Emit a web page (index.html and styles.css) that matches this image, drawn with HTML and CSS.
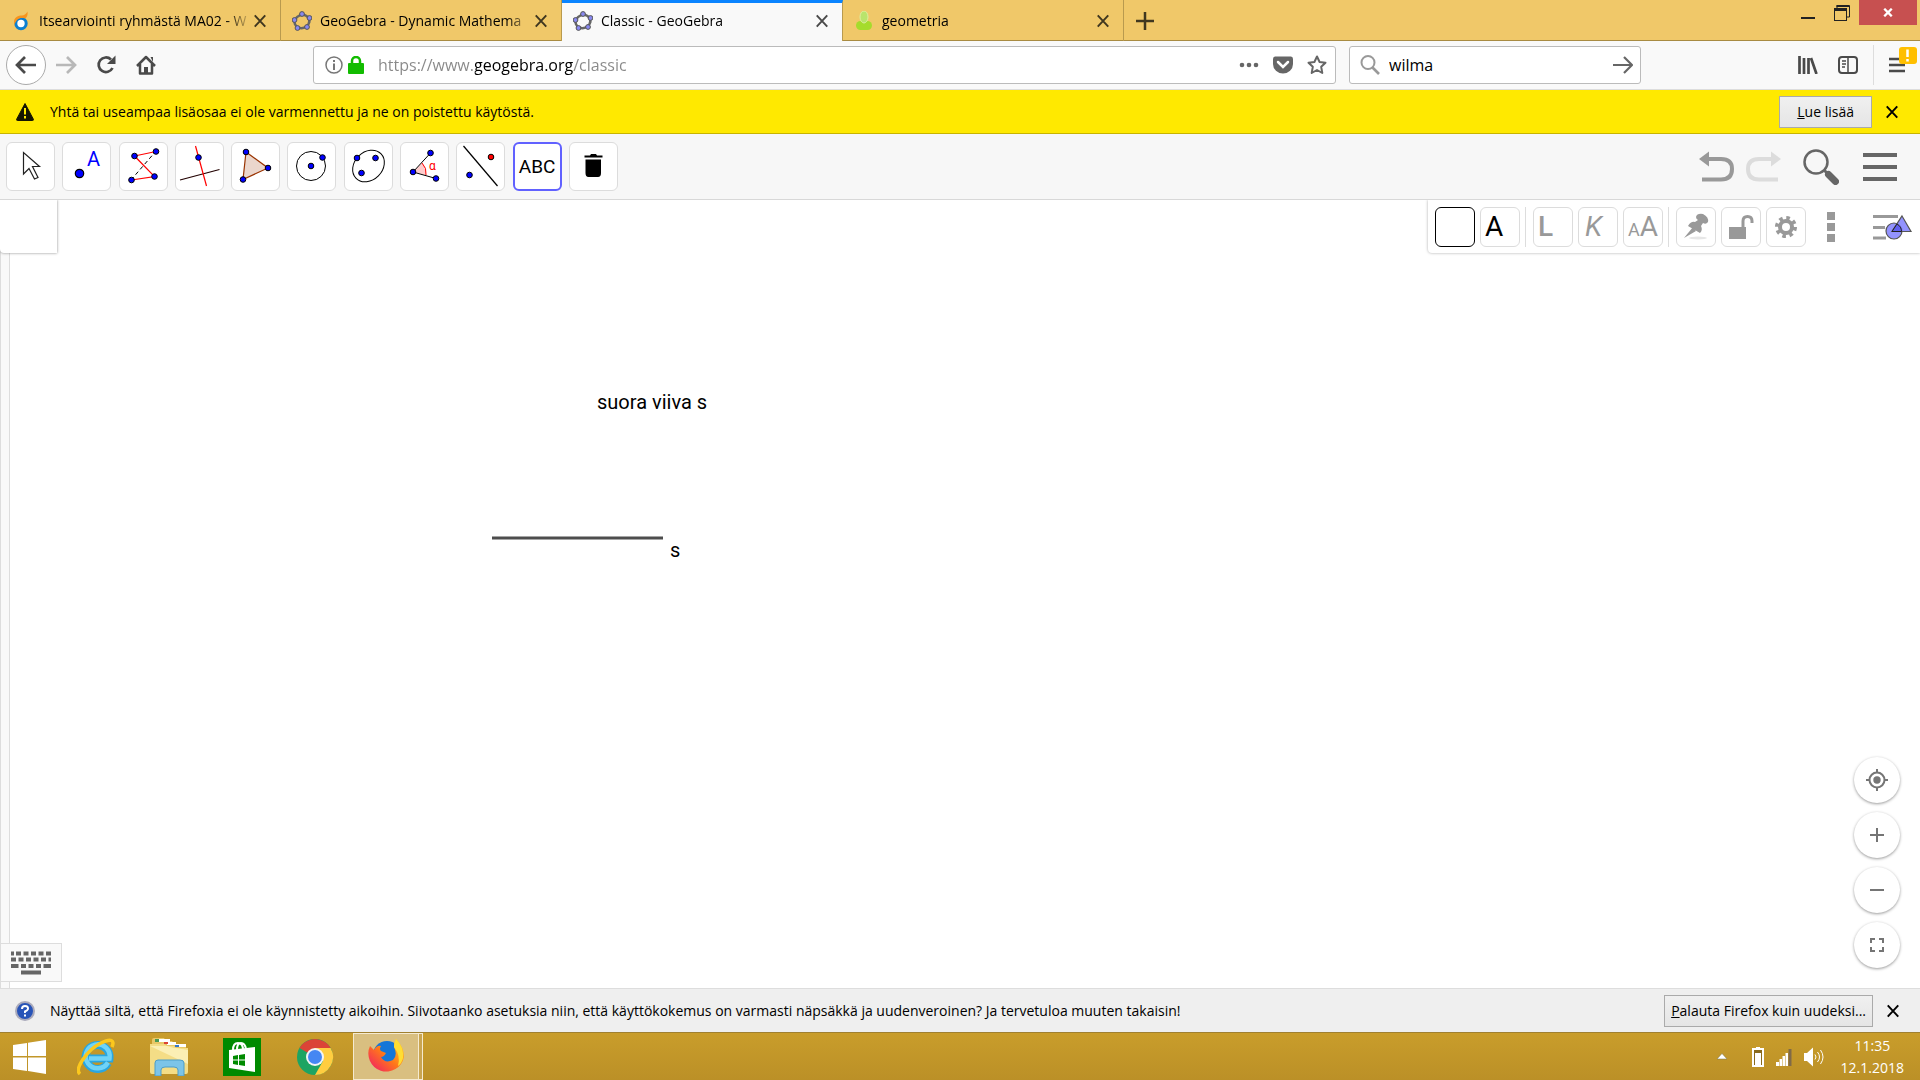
FILE: index.html
```html
<!DOCTYPE html>
<html lang="fi">
<head>
    <meta charset="UTF-8">
    <meta name="viewport" content="width=device-width, initial-scale=1.0">
    <title>Classic - GeoGebra</title>
    <link rel="stylesheet" href="styles.css">
</head>
<body>
    <!-- Shared icons -->
    <svg class="sprite" aria-hidden="true">
        <symbol id="close" viewBox="0 0 16 16">
            <path d="M2 1.500L14 14.500M14 1.500L2 14.500" fill="none" stroke="currentColor" stroke-width="2.200"/>
        </symbol>
        <symbol id="geogebra" viewBox="0 0 20 20">
            <ellipse cx="10" cy="10.500" rx="7.500" ry="6.500" fill="none" stroke="#666" stroke-width="2.500" transform="rotate(-20 10 10.500)"/>
            <g fill="#8888f0" stroke="#555" stroke-width="1">
                <circle cx="10" cy="3" r="2.400"/><circle cx="17.500" cy="7" r="2.400"/><circle cx="15" cy="16" r="2.400"/>
                <circle cx="5.500" cy="17" r="2.400"/><circle cx="2.500" cy="9" r="2.400"/>
            </g>
        </symbol>
    </svg>

    <!-- Browser tabs -->
    <header class="tabs">
        <div class="tab">
            <svg class="favicon" viewBox="0 0 20 20">
                <circle cx="10" cy="12.500" r="5.200" fill="#fff" stroke="#0b7fd0" stroke-width="3"/>
                <path d="M3.500 14C1.500 7 6 4.500 11 4.500C13 4.500 15 3 16.500 0.500C17 4 16 6.500 14 7.500C9 6 5 8 3.500 14Z" fill="#f7941d"/>
            </svg>
            <a class="tab-title" href="#">Itsearviointi ryhmästä MA02 - W</a>
            <button class="tab-close" aria-label="Sulje"><svg><use href="#close"/></svg></button>
        </div>
        <div class="tab">
            <svg class="favicon"><use href="#geogebra"/></svg>
            <a class="tab-title" href="#">GeoGebra - Dynamic Mathema</a>
            <button class="tab-close" aria-label="Sulje"><svg><use href="#close"/></svg></button>
        </div>
        <div class="tab active">
            <svg class="favicon"><use href="#geogebra"/></svg>
            <a class="tab-title" href="#">Classic - GeoGebra</a>
            <button class="tab-close" aria-label="Sulje"><svg><use href="#close"/></svg></button>
        </div>
        <div class="tab">
            <svg class="favicon" viewBox="0 0 20 20">
                <rect x="2" y="10" width="16" height="9" rx="4.500" fill="#a5dc2c"/>
                <ellipse cx="10" cy="6" rx="4" ry="6" fill="#b9e46c" stroke="#dcef9e"/>
            </svg>
            <a class="tab-title" href="#">geometria</a>
            <button class="tab-close" aria-label="Sulje"><svg><use href="#close"/></svg></button>
        </div>
        <button class="new-tab" aria-label="Uusi välilehti">
            <svg width="18" height="18" viewBox="0 0 18 18"><path d="M9 0V18M0 9H18" stroke="#40371f" stroke-width="2.500"/></svg>
        </button>
        <div class="window-buttons">
            <button aria-label="Pienennä"><svg width="14" height="16"><rect y="12" width="14" height="2" fill="#222"/></svg></button>
            <button aria-label="Palauta">
                <svg width="16" height="16" viewBox="0 0 16 16"><path d="M3 3V0.500H15.500V12H12" fill="none" stroke="#222"/><path d="M2.500 1H15" stroke="#222" stroke-width="2"/><rect x="0.500" y="4" width="12" height="11.500" fill="#f0c869" stroke="#222"/><path d="M0 4.500H13" stroke="#222" stroke-width="3"/></svg>
            </button>
            <button class="window-close" aria-label="Sulje ikkuna">
                <svg width="10" height="9" viewBox="0 0 12 10"><path d="M1.500 0.500L10.500 9.500M10.500 0.500L1.500 9.500" stroke="#fff" stroke-width="2.800"/></svg>
            </button>
        </div>
    </header>

    <!-- Address bar -->
    <nav class="navbar">
        <div class="nav-buttons">
            <button class="back" aria-label="Takaisin">
                <svg width="22" height="20" viewBox="0 0 22 20"><path d="M21 10H3M10 2L2 10L10 18" fill="none" stroke="#4a4a4a" stroke-width="2.700"/></svg>
            </button>
            <button aria-label="Eteenpäin">
                <svg width="22" height="20" viewBox="0 0 22 20"><path d="M1 10H19M12 2L20 10L12 18" fill="none" stroke="#b8b8b8" stroke-width="2.700"/></svg>
            </button>
            <button aria-label="Päivitä">
                <svg width="20" height="20" viewBox="0 0 20 20"><path d="M15 4.500A7.300 7.300 0 1 0 16.500 13" fill="none" stroke="#4a4a4a" stroke-width="2.700"/><path d="M19.500 0.500V9H11Z" fill="#4a4a4a"/></svg>
            </button>
            <button aria-label="Koti">
                <svg width="20" height="20" viewBox="0 0 20 20"><path d="M1 11L10 2L19 11M4 9V18.500H16V9" fill="none" stroke="#4a4a4a" stroke-width="2.500" stroke-linejoin="round"/><path d="M8 18V12H12V18M14.500 2H17V7" fill="#4a4a4a"/></svg>
            </button>
        </div>
        <div class="field url-field">
            <svg width="18" height="18" viewBox="0 0 18 18"><circle cx="9" cy="9" r="8" fill="none" stroke="#777" stroke-width="1.500"/><path d="M9 7.500V14M9 4V6" stroke="#777" stroke-width="2"/></svg>
            <svg width="16" height="18" viewBox="0 0 16 18"><rect y="7" width="16" height="11" rx="1" fill="#12bc00"/><path d="M4 8V5A4 4 0 0 1 12 5V8" fill="none" stroke="#12bc00" stroke-width="2.500"/></svg>
            <input class="url" type="text" aria-label="Osoite" value="https://www.geogebra.org/classic">
            <svg width="20" height="18" viewBox="0 0 20 18"><g fill="#666"><circle cx="3" cy="9" r="2.300"/><circle cx="10" cy="9" r="2.300"/><circle cx="17" cy="9" r="2.300"/></g></svg>
            <svg width="20" height="18" viewBox="0 0 20 18"><path d="M2 0.500H18Q20 0.500 20 3V8A10 9.500 0 0 1 0 8V3Q0 0.500 2 0.500Z" fill="#666"/><path d="M5 6L10 11L15 6" fill="none" stroke="#fff" stroke-width="2.500" stroke-linecap="round"/></svg>
            <svg width="20" height="20" viewBox="0 0 20 20"><path d="M10 1.500L12.600 7L18.500 7.700L14.200 11.800L15.300 18L10 15L4.700 18L5.800 11.800L1.500 7.700L7.400 7Z" fill="none" stroke="#666" stroke-width="2" stroke-linejoin="round"/></svg>
        </div>
        <div class="field search-field">
            <svg width="20" height="20" viewBox="0 0 20 20"><circle cx="8" cy="7.500" r="6.500" fill="none" stroke="#999" stroke-width="2"/><path d="M12.500 12.500L19 19" stroke="#999" stroke-width="2.700"/></svg>
            <input type="text" aria-label="Haku" value="wilma">
            <svg width="20" height="18" viewBox="0 0 20 18"><path d="M0 9H18M11 1L19 9L11 17" fill="none" stroke="#666" stroke-width="2.200"/></svg>
        </div>
        <div class="nav-tools">
            <button aria-label="Kirjasto"><svg width="20" height="18" viewBox="0 0 20 18"><path d="M1.500 0V18M6 2V18M10.500 2V18M13 2L18.500 18" stroke="#4a4a4a" stroke-width="2.700"/></svg></button>
            <button aria-label="Sivupaneeli"><svg width="20" height="18" viewBox="0 0 20 18"><rect x="1" y="1" width="18" height="16" rx="3" fill="none" stroke="#4a4a4a" stroke-width="2"/><path d="M10 1V17M4 5H8M4 8H8M4 11H7" stroke="#4a4a4a" stroke-width="1.500"/></svg></button>
            <button class="app-menu" aria-label="Valikko">
                <svg width="16" height="18" viewBox="0 0 16 18"><path d="M0 3H16M0 9H16M0 15H16" stroke="#4a4a4a" stroke-width="2.500"/></svg>
                <span class="badge"><svg width="17" height="17" viewBox="0 0 17 17"><path d="M8.500 2.500V10M8.500 12V14.500" stroke="#fff" stroke-width="2.500"/></svg></span>
            </button>
        </div>
    </nav>

    <!-- Add-on warning -->
    <div class="notice warning">
        <svg width="18" height="18" viewBox="0 0 18 18"><path d="M9 0.500L17.500 16.500Q17.500 17.500 16.500 17.500H1.500Q0.500 17.500 0.500 16.500Z" fill="#141400" stroke="#141400" stroke-linejoin="round"/><path d="M9 5V11.500M9 13V15.500" stroke="#ffe900" stroke-width="2"/></svg>
        <p>Yhtä tai useampaa lisäosaa ei ole varmennettu ja ne on poistettu käytöstä.</p>
        <button class="notice-button"><u>L</u>ue lisää</button>
        <button class="notice-close" aria-label="Sulje"><svg><use href="#close"/></svg></button>
    </div>

    <!-- GeoGebra -->
    <div class="toolbar">
        <div class="tools">
            <button aria-label="Siirrä"><svg viewBox="0 0 49 49"><path d="M17.500 10.500V32L23 26.500L28.500 37L32 35.500L26.500 24.500H33.500Z" fill="#fff" stroke="#222" stroke-width="1.200"/></svg></button>
            <button aria-label="Piste"><svg viewBox="0 0 49 49"><circle cx="17.500" cy="31.500" r="4.200" fill="#00f" stroke="#000" stroke-width="1.200"/><text x="25" y="24" class="point-name">A</text></svg></button>
            <button aria-label="Murtoviiva"><svg viewBox="0 0 49 49"><path d="M12 38L37 9" stroke="#000" stroke-dasharray="4 3"/><path d="M37 9.500L15.500 14L35.500 34.500L12.500 38" fill="none" stroke="#f00" stroke-width="1.200"/><g fill="#00f" stroke="#000"><circle cx="37" cy="9.500" r="2.800"/><circle cx="15.500" cy="14" r="2.800"/><circle cx="35.500" cy="34.500" r="2.800"/><circle cx="12.500" cy="38" r="2.800"/></g></svg></button>
            <button aria-label="Normaali"><svg viewBox="0 0 49 49"><path d="M5 38L44.500 27.500" stroke="#200" stroke-width="1.200"/><path d="M20.500 4L31.500 44" stroke="#f00" stroke-width="1.200"/><circle cx="23.500" cy="15.500" r="2.800" fill="#00f" stroke="#000"/></svg></button>
            <button aria-label="Monikulmio"><svg viewBox="0 0 49 49"><path d="M15 10L37 26L12 37.500Z" fill="#ebd6cc" stroke="#993300" stroke-width="1.200"/><g fill="#00f" stroke="#000"><circle cx="15" cy="10" r="2.800"/><circle cx="37" cy="26" r="2.800"/><circle cx="12" cy="37.500" r="2.800"/></g></svg></button>
            <button aria-label="Ympyrä"><svg viewBox="0 0 49 49"><circle cx="24" cy="24" r="14.500" fill="none" stroke="#000"/><g fill="#00f" stroke="#000"><circle cx="24" cy="24" r="2.800"/><circle cx="35.500" cy="15.500" r="2.800"/></g></svg></button>
            <button aria-label="Ellipsi"><svg viewBox="0 0 49 49"><ellipse cx="24.500" cy="24" rx="17.500" ry="14" transform="rotate(-45 24.500 24)" fill="none" stroke="#000"/><g fill="#00f" stroke="#000"><circle cx="13" cy="16" r="2.800"/><circle cx="31.500" cy="16" r="2.800"/><circle cx="17.500" cy="31" r="2.800"/></g></svg></button>
            <button aria-label="Kulma"><svg viewBox="0 0 49 49"><path d="M13 30L22 21Q27 26 26 33Z" fill="#fcc"/><path d="M22 21Q27 26 26 33" fill="none" stroke="#f00"/><path d="M30.500 11L13 30L36 36.500" fill="none" stroke="#000"/><g fill="#00f" stroke="#000"><circle cx="30.500" cy="11" r="2.800"/><circle cx="13" cy="30" r="2.800"/><circle cx="36" cy="36.500" r="2.800"/></g><text x="29" y="28" class="angle-name">α</text></svg></button>
            <button aria-label="Peilaus"><svg viewBox="0 0 49 49"><path d="M7.500 4L41.500 44" stroke="#000" stroke-width="1.200"/><circle cx="13.500" cy="33" r="2.800" fill="#00f" stroke="#000"/><circle cx="35" cy="15" r="2.800" fill="#f00" stroke="#000"/></svg></button>
            <button class="selected">ABC</button>
            <button aria-label="Poista"><svg viewBox="0 0 49 49"><path d="M16.500 17.500H32V31Q32 35 29 35H19.500Q16.500 35 16.500 31ZM15.500 13.500H21L22 12H27L28 13.500H33.500V15.500H15.500Z"/></svg></button>
        </div>
        <div class="actions">
            <button aria-label="Kumoa"><svg width="36" height="32" viewBox="0 0 36 32"><path d="M8 8H22Q33 8 33 18Q33 28.500 22 28.500H3" fill="none" stroke="#999" stroke-width="4"/><path d="M0 8L10 0.500V15.500Z" fill="#999"/></svg></button>
            <button aria-label="Tee uudelleen"><svg width="36" height="32" viewBox="0 0 36 32"><path d="M28 8H14Q3 8 3 18Q3 28.500 14 28.500H33" fill="none" stroke="#dcdcdc" stroke-width="4"/><path d="M36 8L26 0.500V15.500Z" fill="#dcdcdc"/></svg></button>
            <button class="find" aria-label="Etsi"><svg width="36" height="36" viewBox="0 0 36 36"><circle cx="13" cy="13" r="11.500" fill="none" stroke="#666" stroke-width="2.500"/><path d="M21 21L25 25" stroke="#666" stroke-width="3"/><path d="M25.500 25.500L32.500 32.500" stroke="#666" stroke-width="7" stroke-linecap="round"/></svg></button>
            <button aria-label="Valikko"><svg width="34" height="30" viewBox="0 0 34 30"><path d="M0 3H34M0 15H34M0 27H34" stroke="#666" stroke-width="4"/></svg></button>
        </div>
    </div>

    <main class="workspace">
        <div class="algebra-strip"></div>
        <div class="algebra-corner"></div>
        <div class="graphics">
            <svg class="segment" width="171" height="4"><path d="M0 2H171" stroke="#4d4d4d" stroke-width="3"/></svg>
            <span class="object-text">suora viiva s</span>
            <span class="object-label">s</span>
        </div>
        <div class="stylebar">
            <button class="colour" aria-label="Taustaväri"></button>
            <button class="text-colour">A</button>
            <span class="divider"></span>
            <button class="bold">L</button>
            <button class="italic">K</button>
            <button class="size"><small>A</small>A</button>
            <span class="divider"></span>
            <button aria-label="Kiinnitä"><svg width="26" height="28" viewBox="0 0 26 28"><ellipse cx="15" cy="25" rx="9" ry="1.500" fill="#e6e6e6"/><path d="M13 4Q14 0 20 1Q26 4 25 9Q23 12 20 10L18 13Q20 17 17 20L5 13Q8 8 12 9L15 7Q13 6 13 4Z" fill="#999"/><path d="M10 14L1 25L13 18Z" fill="#999"/></svg></button>
            <button aria-label="Lukitus"><svg width="26" height="26" viewBox="0 0 26 26"><rect x="1" y="13" width="17" height="12" fill="#999"/><path d="M15 13V7Q15 2.500 19.500 2.500Q24 2.500 24 7V9" fill="none" stroke="#999" stroke-width="3"/></svg></button>
            <button aria-label="Asetukset"><svg width="22" height="22" viewBox="0 0 22 22"><circle cx="11" cy="11" r="6" fill="none" stroke="#999" stroke-width="4"/><circle cx="11" cy="11" r="9" fill="none" stroke="#999" stroke-width="4" stroke-dasharray="3.500 3.570"/></svg></button>
            <button class="plain more" aria-label="Lisää"><svg width="8" height="30" viewBox="0 0 8 30"><path d="M0 0H8V8H0ZM0 11H8V19H0ZM0 22H8V30H0Z" fill="#999"/></svg></button>
            <button class="plain style-toggle" aria-label="Tyylipalkki"><svg width="40" height="28" viewBox="0 0 40 28"><path d="M0 3.500H25M0 14.500H12M0 25H13" stroke="#999" stroke-width="3"/><g fill="#8080ff" fill-opacity="0.850" stroke="#555" stroke-width="1.200"><circle cx="21" cy="18" r="8"/><path d="M29 3L38 18.500H19Z"/></g><path d="M24 11Q28.500 13.500 28.500 18.500H19Z" fill="#6060f0" stroke="#222"/></svg></button>
        </div>
        <div class="zoom-buttons">
            <button aria-label="Oletusnäkymä"><svg width="22" height="22" viewBox="0 0 22 22"><circle cx="11" cy="11" r="7.500" fill="none" stroke="#757575" stroke-width="2"/><circle cx="11" cy="11" r="3.700" fill="#757575"/><path d="M11 0V4M11 18V22M0 11H4M18 11H22" stroke="#757575" stroke-width="2"/></svg></button>
            <button aria-label="Lähennä"><svg width="14" height="14" viewBox="0 0 14 14"><path d="M7 0V14M0 7H14" stroke="#757575" stroke-width="2"/></svg></button>
            <button aria-label="Loitonna"><svg width="14" height="14" viewBox="0 0 14 14"><path d="M0 7H14" stroke="#757575" stroke-width="2"/></svg></button>
            <button aria-label="Koko näyttö"><svg width="14" height="14" viewBox="0 0 14 14"><path d="M1 5V1H5M9 1H13V5M13 9V13H9M5 13H1V9" fill="none" stroke="#757575" stroke-width="2"/></svg></button>
        </div>
        <button class="keyboard" aria-label="Näppäimistö">
            <svg width="40" height="24" viewBox="0 0 40 24"><path d="M0 2.500H3M5 2.500H10M12.500 2.500H17.500M20 2.500H25M27.500 2.500H32.500M35 2.500H40M0 8.500H5M7.500 8.500H12.500M15 8.500H20M22.500 8.500H27.500M30 8.500H35M37.500 8.500H40M0 15H7.500M10 15H15M17.500 15H22.500M25 15H30M32.500 15H40M10 21.500H30" stroke="#666" stroke-width="4"/></svg>
        </button>
    </main>

    <!-- Firefox refresh prompt -->
    <div class="notice refresh">
        <svg width="20" height="20" viewBox="0 0 20 20"><circle cx="10" cy="10" r="9" fill="#2854b8" stroke="#aab" stroke-width="2"/><path d="M7 8Q7 5 10 5Q13.300 5 13 8Q12.500 9.500 10 10.500V12M10 13.500V15.500" fill="none" stroke="#fff" stroke-width="2"/></svg>
        <p>Näyttää siltä, että Firefoxia ei ole käynnistetty aikoihin. Siivotaanko asetuksia niin, että käyttökokemus on varmasti näpsäkkä ja uudenveroinen? Ja tervetuloa muuten takaisin!</p>
        <button class="notice-button"><u>P</u>alauta Firefox kuin uudeksi...</button>
        <button class="notice-close" aria-label="Sulje"><svg><use href="#close"/></svg></button>
    </div>

    <!-- Windows taskbar -->
    <footer class="taskbar">
        <button class="task start" aria-label="Käynnistä"><svg width="34" height="34" viewBox="0 0 34 34"><path d="M0 5L14 3V16H0ZM15 2.800L33 0V16H15ZM0 17.500H14V31L0 29ZM15 17.500H33V34L15 31Z" fill="#fff"/></svg></button>
        <button class="task" aria-label="Internet Explorer">
            <svg width="38" height="38" viewBox="0 0 38 38"><path d="M31 25A12 12 0 1 1 32.500 20.500H12" fill="none" stroke="#29a6e0" stroke-width="8"/><path d="M31 24.500A12 12 0 1 1 32.500 20.500H12" fill="none" stroke="#6fd3f7" stroke-width="4.500"/><path d="M3 36C-3 31 10 12 24 5C34 0 38 2 35 9" fill="none" stroke="#fcc81c" stroke-width="3.500"/></svg>
        </button>
        <button class="task" aria-label="Resurssienhallinta">
            <svg width="38" height="38" viewBox="0 0 38 38"><path d="M2 2Q2 0 4 0H14L16 3H22L24 6H36V14H2Z" fill="#e8c868"/><path d="M5 1H13V4H5Z" fill="#4b9a56"/><path d="M9 1H20V4H9ZM17 4H26V7H17ZM26 6H36V9H26Z" fill="#fff"/><path d="M14 4H18V6H14Z" fill="#d43"/><path d="M25 7H29V9H25Z" fill="#37c"/><path d="M0 6H14L17 8H24L26 10H38V34Q38 36 36 36H2Q0 36 0 34Z" fill="#f4dd86"/><path d="M0 8L38 26V12L26 10H24L17 8Z" fill="#fbefb4"/><path d="M5 38V25Q5 22 8 22H30Q34 22 34 25V38H28V32Q28 29 24 29H15Q11 29 11 32V38Z" fill="#7cc4e8" stroke="#4d9dc8"/></svg>
        </button>
        <button class="task" aria-label="Kauppa">
            <svg width="38" height="38" viewBox="0 0 38 38"><rect width="38" height="38" fill="#008a00"/><path d="M6 12L32 9V34L6 30Z" fill="#fff"/><path d="M10 12Q10 5 15 5Q20 5 20 12M14 12Q14 5 18 5Q22 5 23 11" fill="none" stroke="#fff" stroke-width="2"/><path d="M10 18L15 17V21.500H10ZM16 17L22 16V21.500H16ZM10 22.500H15V27L10 26ZM16 22.500H22V28L16 27Z" fill="#008a00"/></svg>
        </button>
        <button class="task" aria-label="Chrome">
            <svg width="38" height="38" viewBox="0 0 38 38"><circle cx="19" cy="19" r="18" fill="#1da462"/><path d="M19 19L3.500 10A18 18 0 0 1 34.600 10H19Z" fill="#db4437"/><path d="M19 10H34.600A18 18 0 0 1 19 37L27 23Z" fill="#ffcd40"/><circle cx="19" cy="19" r="9" fill="#f4f4f4"/><circle cx="19" cy="19" r="7" fill="#4587f3"/></svg>
        </button>
        <button class="task running" aria-label="Firefox">
            <svg width="38" height="38" viewBox="0 0 38 38"><defs><linearGradient id="fox" x1="1" y1="0" x2="0" y2="1"><stop offset="0" stop-color="#ffe226"/><stop offset="0.500" stop-color="#ff7a18"/><stop offset="1" stop-color="#f0136f"/></linearGradient></defs><circle cx="20" cy="17" r="14" fill="#1476d8"/><path d="M3 8L7 12Q10 7 14 8Q12 11 14 13L19 15Q17 19 14 19Q18 26 26 22Q31 17 27 9Q27 4 29 1Q37 9 37 19A18 18 0 1 1 3 8Z" fill="url(#fox)"/><path d="M27 9Q27 4 29 1Q37 9 36 20Q35 25 31 28Q34 18 27 9Z" fill="#ffdd33"/></svg>
        </button>
        <div class="tray">
            <svg class="tray-arrow" width="10" height="8" viewBox="0 0 10 8"><path d="M0 6L5 0.500L10 6Z" fill="#fff" stroke="#775" stroke-width="0.500"/></svg>
            <svg class="battery" width="12" height="20" viewBox="0 0 12 20"><rect x="1" y="2" width="10" height="17" fill="#8a6a1c" stroke="#fff" stroke-width="2"/><rect x="3" y="6" width="6" height="12" fill="#fff"/><path d="M4 1H8" stroke="#fff" stroke-width="2"/></svg>
            <svg class="signal" width="16" height="18" viewBox="0 0 16 18"><path d="M0 14H3V18H0ZM3.500 11H6V18H3.500ZM6.500 8H9V18H6.500ZM9.500 5H12V18H9.500Z" fill="#fff"/><path d="M12.500 1H15.500V18H12.500Z" fill="#806a48"/></svg>
            <svg class="volume" width="20" height="20" viewBox="0 0 20 20"><path d="M0 6H3L9 0.500V19.500L3 14H0Z" fill="#fff"/><path d="M11 7.500Q13 10 11 12.500M13.500 5Q17.500 10 13.500 15M16.500 3Q21.500 10 16.500 17" fill="none" stroke="#fff"/></svg>
            <div class="clock">
                <time>11:35</time>
                <time datetime="2018-01-12">12.1.2018</time>
            </div>
        </div>
    </footer>
</body>
</html>
```
FILE: styles.css
```css
* {
    box-sizing: border-box;
}

body {
    margin: 0;
    height: 100vh;
    display: flex;
    flex-direction: column;
    overflow: hidden;
    background-color: #fff;
    color: #000;
    font-family: "Segoe UI", "Open Sans", sans-serif;
    font-size: 14px;
}

button {
    display: flex;
    align-items: center;
    justify-content: center;
    margin: 0;
    padding: 0;
    border: none;
    background: none;
    color: inherit;
    font: inherit;
}

input {
    min-width: 0;
    padding: 0;
    border: none;
    outline: none;
    background: none;
    font: inherit;
}

svg {
    display: block;
    flex: none;
}

p {
    margin: 0;
}

.sprite {
    position: absolute;
    width: 0;
    height: 0;
}

/* Tabs */
.tabs {
    display: flex;
    flex: none;
    height: 41px;
    background-color: #f0c869;
    box-shadow: inset 0 -1px #a88b42;
}

.tab {
    display: flex;
    align-items: center;
    width: 281px;
    padding: 0 12px 0 11px;
    border-right: 1px solid #b99a4e;
}

.tab.active {
    background-color: #f9f9f9;
    border-top: 3px solid #0a84ff;
    padding-bottom: 3px;
}

.favicon {
    width: 20px;
    height: 20px;
    margin-right: 8px;
}

.tab-title {
    flex: 1;
    white-space: nowrap;
    color: #000;
    text-decoration: none;
    line-height: 24px;
    -webkit-mask-image: linear-gradient(to right, #000 88%, transparent);
    mask-image: linear-gradient(to right, #000 88%, transparent);
}

.tab-close {
    width: 16px;
    height: 16px;
    color: #40371f;
}

.tab-close svg {
    width: 14px;
    height: 14px;
}

.tab.active .tab-close {
    color: #4a4a4a;
}

.new-tab {
    width: 42px;
}

.window-buttons {
    display: flex;
    margin-left: auto;
    margin-right: 3px;
    height: 25px;
}

.window-buttons button {
    width: 34px;
}

.window-buttons .window-close {
    width: 58px;
    background-color: #c75050;
}

/* Address bar */
.navbar {
    display: flex;
    align-items: center;
    flex: none;
    height: 49px;
    background-color: #f9f9f9;
    border-bottom: 1px solid #ddd;
}

.nav-buttons {
    display: flex;
    align-items: center;
    width: 313px;
    padding-left: 6px;
}

.nav-buttons button {
    width: 40px;
    height: 40px;
}

.nav-buttons .back {
    border: 1px solid #aaa;
    border-radius: 50%;
    background-color: #fff;
}

.field {
    display: flex;
    align-items: center;
    height: 38px;
    border: 1px solid #bbb;
    border-radius: 3px;
    background-color: #fff;
    font-size: 16px;
}

.url-field {
    flex: 1;
    gap: 14px;
    margin-right: 13px;
    padding: 0 8px 0 11px;
}

.url-field svg:first-child {
    margin-right: -9px;
}

.url-field .url {
    flex: 1;
    /* scheme and path are dimmed, the domain is not */
    background: linear-gradient(to right, #888 97px, #000 97px, #000 195px, #888 195px);
    -webkit-background-clip: text;
    background-clip: text;
    color: transparent;
}

.search-field {
    width: 292px;
    gap: 9px;
    padding: 0 7px 0 10px;
}

.search-field input {
    flex: 1;
}

.nav-tools {
    display: flex;
    align-items: center;
    justify-content: flex-end;
    width: 279px;
    height: 40px;
}

.nav-tools button {
    width: 40px;
    height: 40px;
}

.nav-tools .app-menu {
    position: relative;
    width: 47px;
    margin-left: 5px;
    border-left: 1px solid #ddd;
}

.badge {
    position: absolute;
    top: 2px;
    right: 3px;
    width: 18px;
    height: 17px;
    border-radius: 3px;
    background-color: #ffbf00;
}

/* Notification bars */
.notice {
    display: flex;
    align-items: center;
    flex: none;
    height: 44px;
    padding: 0 21px 0 16px;
    border-bottom: 1px solid #c8b400;
}

.notice p {
    flex: 1;
    margin-left: 16px;
    white-space: nowrap;
}

.warning {
    background-color: #ffe900;
}

.refresh {
    padding-left: 15px;
    border-top: 1px solid #ddd;
    border-bottom: none;
    background-color: #efefef;
}

.refresh svg:first-child {
    margin-right: -1px;
}

.notice-button {
    height: 32px;
    margin-right: 13px;
    padding: 0 6px;
    border: 1px solid #aaa;
    background: linear-gradient(#f0f0f0, #e5e5e5);
    white-space: pre;
}

.warning .notice-button {
    padding: 0 17px;
}

.notice-close svg {
    width: 14px;
    height: 14px;
}

/* GeoGebra toolbar */
.toolbar {
    display: flex;
    align-items: center;
    justify-content: space-between;
    flex: none;
    height: 66px;
    padding: 0 23px 0 6px;
    border-bottom: 1px solid #d8d8d8;
    background-color: #f7f7f7;
}

.tools {
    display: flex;
    justify-content: space-between;
    width: 612px;
}

.tools button {
    width: 49px;
    height: 49px;
    border: 1px solid #dcdcdc;
    border-radius: 6px;
    background-color: #fff;
    font-family: Roboto, sans-serif;
    font-size: 19px;
}

.tools svg {
    width: 49px;
    height: 49px;
}

.tools .selected {
    border: 2px solid #6161ff;
}

.point-name {
    fill: #00f;
    font: 20px Roboto, sans-serif;
}

.angle-name {
    fill: #f00;
    font: 12px Roboto, sans-serif;
}

.actions {
    display: flex;
    align-items: center;
    gap: 10px;
}

.actions .find {
    margin: 0 14px 0 12px;
}

/* Drawing area */
.workspace {
    position: relative;
    flex: 1;
    min-height: 0;
}

.algebra-strip {
    width: 10px;
    height: 100%;
    border-left: 1px solid #ddd;
    border-right: 1px solid #ddd;
    background-color: #f9f9f9;
}

.algebra-corner {
    position: absolute;
    top: 0;
    left: 0;
    width: 57px;
    height: 53px;
    border-bottom-left-radius: 4px;
    background-color: #fff;
    box-shadow: 0 0 3px #888;
    clip-path: inset(0 -4px -4px 0);
}

.graphics {
    font: 20px Roboto, sans-serif;
}

.segment {
    position: absolute;
    top: 336px;
    left: 492px;
}

.object-text {
    position: absolute;
    top: 190px;
    left: 597px;
}

.object-label {
    position: absolute;
    top: 338px;
    left: 670px;
}

.stylebar {
    position: absolute;
    top: 0;
    right: 0;
    display: flex;
    align-items: center;
    gap: 5px;
    height: 53px;
    padding: 0 7px;
    border-bottom-left-radius: 4px;
    background-color: #fff;
    box-shadow: 0 0 3px #aaa;
    clip-path: inset(0 0 -4px -4px);
}

.stylebar button {
    width: 40px;
    height: 40px;
    border: 1px solid #dcdcdc;
    border-radius: 6px;
    color: #999;
    font-family: Roboto, sans-serif;
    font-size: 28px;
}

.stylebar .colour {
    border-color: #000;
}

.stylebar .text-colour {
    justify-content: flex-start;
    padding-left: 4px;
    color: #000;
}

.stylebar .bold {
    justify-content: flex-start;
    padding-left: 4px;
    font-weight: 500;
}

.stylebar .italic {
    justify-content: flex-start;
    padding-left: 6px;
    font-style: italic;
}

.stylebar .size {
    align-items: baseline;
    line-height: 38px;
}

.stylebar small {
    font-size: 18px;
}

.stylebar .plain {
    border: none;
}

.stylebar .more {
    margin-right: 17px;
}

.divider {
    width: 1px;
    height: 40px;
    margin-right: 2px;
    background-color: #ddd;
}

.zoom-buttons {
    position: absolute;
    right: 20px;
    bottom: 20px;
    display: flex;
    flex-direction: column;
    gap: 9px;
}

.zoom-buttons button {
    width: 46px;
    height: 46px;
    border-radius: 50%;
    background-color: #fff;
    box-shadow: 0 1px 3px #999;
}

.keyboard {
    position: absolute;
    left: 0;
    bottom: 6px;
    width: 62px;
    height: 39px;
    border: 1px solid #ddd;
    background-color: #f9f9f9;
}

/* Taskbar */
.taskbar {
    display: flex;
    align-items: center;
    flex: none;
    height: 48px;
    border-top: 1px solid #a08030;
    background: linear-gradient(#c99d2b, #bb9027);
}

.task {
    width: 73px;
    height: 47px;
}

.task.start {
    width: 59px;
}

.task.running {
    width: 70px;
    margin-left: 2px;
    padding-right: 5px;
    border: 1px solid #f5ead0;
    background: linear-gradient(to right, #d9bf80 64px, #f5ead0 64px, #f5ead0 65px, #c9a551 65px);
}

.tray {
    display: flex;
    align-items: center;
    margin-left: auto;
    padding-right: 16px;
}

.tray-arrow {
    margin-right: 25px;
}

.battery {
    margin-right: 12px;
}

.signal {
    margin-right: 12px;
}

.volume {
    margin-right: 17px;
}

.clock {
    display: flex;
    flex-direction: column;
    align-items: center;
    color: #fff;
    line-height: 22px;
}
```
